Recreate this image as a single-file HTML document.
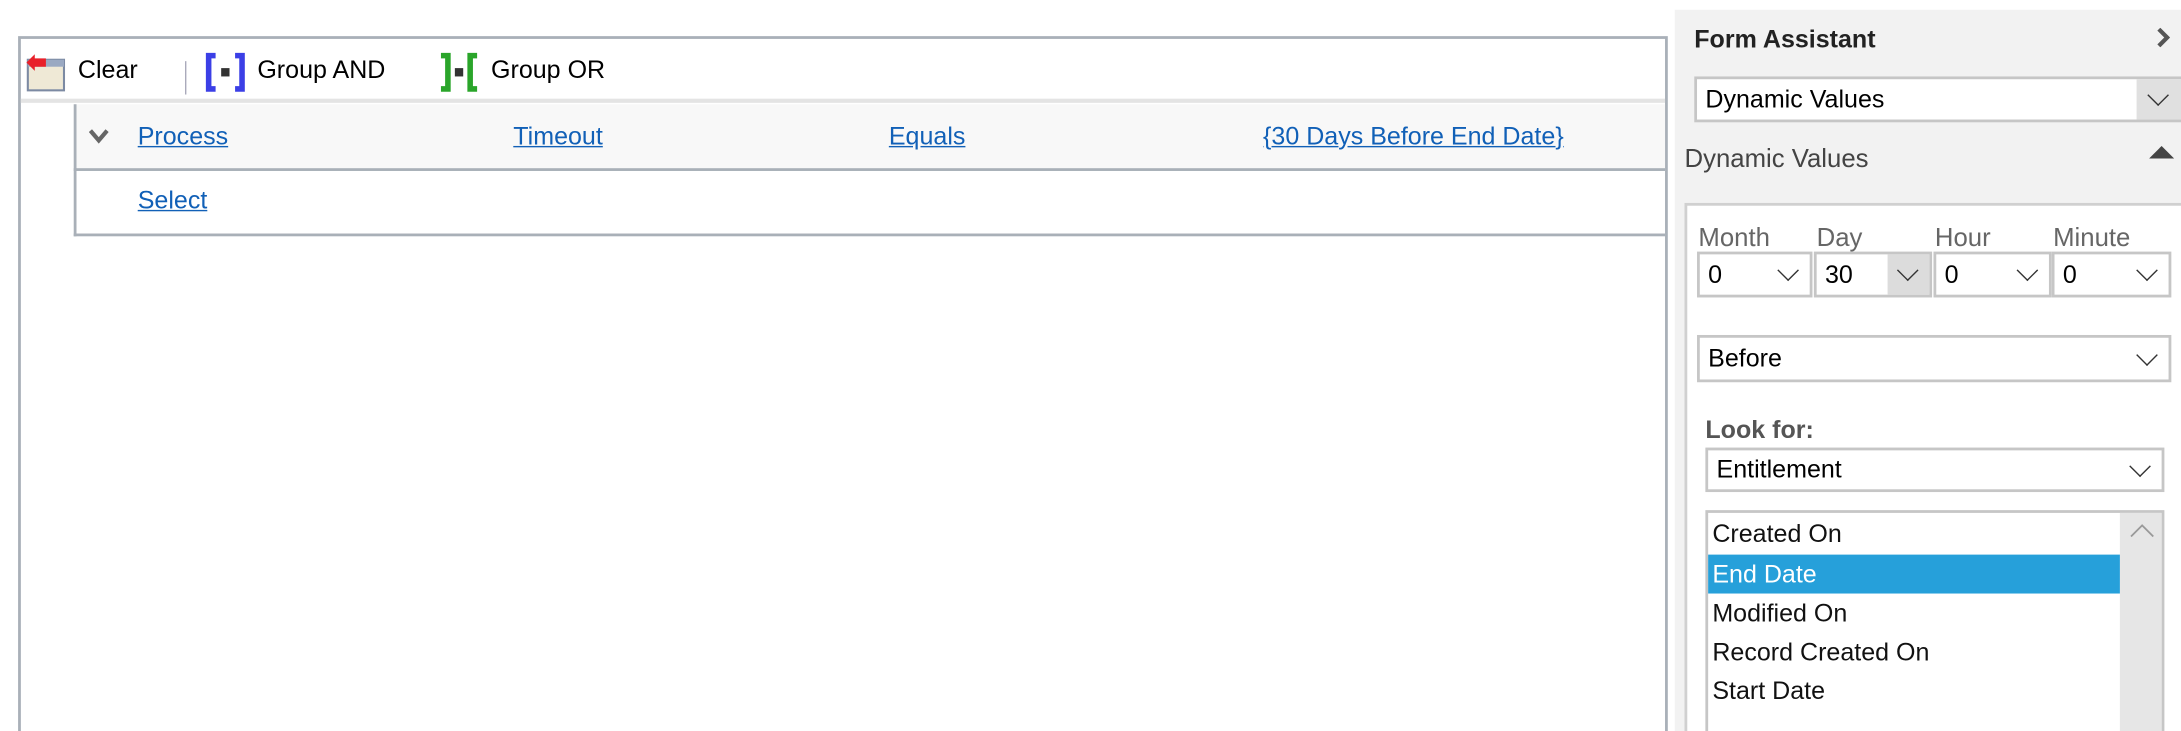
<!DOCTYPE html>
<html><head><meta charset="utf-8"><style>
html,body{margin:0;padding:0;background:#fff;overflow:hidden;width:2181px;height:731px}
#w{position:absolute;left:0;top:0;width:1568px;height:526px;overflow:hidden;transform:scale(1.391,1.39);transform-origin:0 0;font-family:"Liberation Sans",sans-serif;font-size:18px;color:#000}
.a{position:absolute}
.lk{color:#1160b7;text-decoration:underline;position:absolute;line-height:20px}
.sel{position:absolute;border:2px solid #c6c6c6;background:#fff;box-sizing:border-box}
.sel span{position:absolute;left:6px;top:50%;transform:translateY(-50%)}
.chev{position:absolute;width:10px;height:10px;border-right:1.3px solid #333;border-bottom:1.3px solid #333;transform:rotate(45deg)}
.lbl{position:absolute;color:#666;font-size:18.5px;top:160px}
.it{position:absolute;left:1231px;line-height:20px;color:#111}
</style></head><body><div id="w">
<div class="a" style="left:13px;top:26px;width:1186px;height:560px;border:2px solid #a9b0b8;box-sizing:border-box"></div>
<div class="a" style="left:15px;top:71px;width:1182px;height:3px;background:#e4e4e4"></div>
<svg class="a" style="left:17px;top:37px" width="32" height="30" viewBox="0 0 32 30">
<rect x="3" y="6" width="26" height="22" fill="#efe9d6" stroke="#7c8aa3" stroke-width="1.5"/>
<rect x="3" y="6" width="26" height="5" fill="#9aa9c2"/>
<path d="M2 8 L8 2 L8 5 L16 5 L16 11 L8 11 L8 14 Z" fill="#e8202a"/>
</svg>
<div class="a" style="left:56px;top:39px;line-height:22px">Clear</div>
<div class="a" style="left:133px;top:44px;width:1px;height:24px;background:#aab"></div>
<svg class="a" style="left:147px;top:37px" width="30" height="30" viewBox="0 0 30 30">
<path d="M8 3 H3 V27 H8" fill="none" stroke="#3b3fe6" stroke-width="4"/>
<path d="M22 3 H27 V27 H22" fill="none" stroke="#3b3fe6" stroke-width="4"/>
<rect x="12" y="12" width="6" height="6" fill="#333"/></svg>
<div class="a" style="left:185px;top:39px;line-height:22px">Group AND</div>
<svg class="a" style="left:315px;top:37px" width="30" height="30" viewBox="0 0 30 30">
<path d="M2 3 H7 V27 H2" fill="none" stroke="#2aa52a" stroke-width="4"/>
<path d="M28 3 H23 V27 H28" fill="none" stroke="#2aa52a" stroke-width="4"/>
<rect x="12" y="12" width="6" height="6" fill="#333"/></svg>
<div class="a" style="left:353px;top:39px;line-height:22px">Group OR</div>
<div class="a" style="left:53px;top:75px;width:1144px;height:48px;background:#f8f8f8;border-left:2px solid #a9b0b8;border-bottom:2px solid #a9b0b8;box-sizing:border-box"></div>
<div class="a" style="left:53px;top:123px;width:1144px;height:47px;border-left:2px solid #a9b0b8;border-bottom:2px solid #a9b0b8;box-sizing:border-box"></div>
<svg class="a" style="left:64px;top:92px" width="14" height="12" viewBox="0 0 14 12"><path d="M1 2 L7 9 L13 2" fill="none" stroke="#666" stroke-width="3"/></svg>
<div class="lk" style="left:99px;top:88px">Process</div>
<div class="lk" style="left:369px;top:88px">Timeout</div>
<div class="lk" style="left:639px;top:88px">Equals</div>
<div class="lk" style="left:908px;top:88px">{30 Days Before End Date}</div>
<div class="lk" style="left:99px;top:134px">Select</div>
<div class="a" style="left:1204px;top:7px;width:364px;height:560px;background:#f2f2f2"></div>
<div class="a" style="left:1218px;top:17px;font-weight:bold;line-height:22px;color:#222">Form Assistant</div>
<svg class="a" style="left:1550px;top:20px" width="10" height="14" viewBox="0 0 10 14"><path d="M2 1 L8 7 L2 13" fill="none" stroke="#555" stroke-width="3"/></svg>
<div class="sel" style="left:1218px;top:55px;width:352px;height:33px"><span>Dynamic Values</span>
<div class="a" style="right:0;top:0;width:32px;height:29px;background:#e0e0e0"></div>
<div class="chev" style="right:11px;top:6px"></div></div>
<div class="a" style="left:1211px;top:103px;color:#444;font-size:18.5px;line-height:22px">Dynamic Values</div>
<svg class="a" style="left:1545px;top:104px" width="18" height="10"><path d="M0 10 L9 1 L18 10 Z" fill="#444"/></svg>
<div class="a" style="left:1211px;top:146px;width:360px;height:420px;background:#fff;border:2px solid #d0d0d0;box-sizing:border-box"></div>
<div class="lbl" style="left:1221px">Month</div>
<div class="lbl" style="left:1306px">Day</div>
<div class="lbl" style="left:1391px">Hour</div>
<div class="lbl" style="left:1476px">Minute</div>
<div class="sel" style="left:1220px;top:181px;width:83px;height:33px"><span>0</span><div class="chev" style="right:10px;top:6px"></div></div>
<div class="sel" style="left:1304px;top:181px;width:85px;height:33px"><span>30</span><div class="a" style="right:0;top:0;width:30px;height:29px;background:#dcdcdc"></div><div class="chev" style="right:10px;top:6px"></div></div>
<div class="sel" style="left:1390px;top:181px;width:85px;height:33px"><span>0</span><div class="chev" style="right:10px;top:6px"></div></div>
<div class="sel" style="left:1475px;top:181px;width:86px;height:33px"><span>0</span><div class="chev" style="right:10px;top:6px"></div></div>
<div class="sel" style="left:1220px;top:241px;width:341px;height:34px"><span>Before</span><div class="chev" style="right:10px;top:7px"></div></div>
<div class="a" style="left:1226px;top:298px;font-weight:bold;color:#555;line-height:22px">Look for:</div>
<div class="sel" style="left:1226px;top:322px;width:330px;height:32px"><span>Entitlement</span><div class="chev" style="right:10px;top:6px"></div></div>
<div class="a" style="left:1226px;top:367px;width:330px;height:200px;border:2px solid #c6c6c6;box-sizing:border-box;background:#fff"></div>
<div class="a" style="left:1524px;top:369px;width:30px;height:200px;background:#e6e6e6"></div>
<svg class="a" style="left:1531px;top:377px" width="18" height="10"><path d="M1 9 L9 1 L17 9" fill="none" stroke="#999" stroke-width="1.3"/></svg>
<div class="a" style="left:1228px;top:399px;width:296px;height:28px;background:#26a0da"></div>
<div class="it" style="top:374px">Created On</div>
<div class="it" style="top:403px;color:#fff">End Date</div>
<div class="it" style="top:431px">Modified On</div>
<div class="it" style="top:459px">Record Created On</div>
<div class="it" style="top:487px">Start Date</div>
</div></body></html>
